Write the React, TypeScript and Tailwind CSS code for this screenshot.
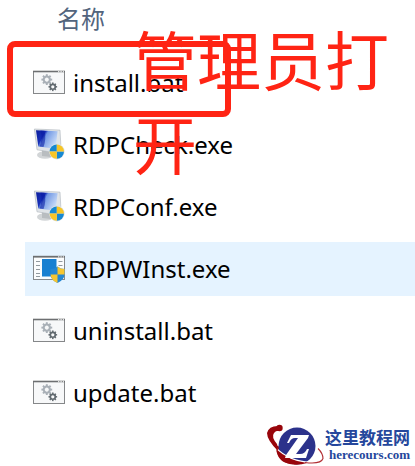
import type { ReactNode } from "react";

type Kind = "batch" | "computer" | "installer";

const files: { name: string; kind: Kind; highlighted?: boolean }[] = [
  { name: "install.bat", kind: "batch" },
  { name: "RDPCheck.exe", kind: "computer" },
  { name: "RDPConf.exe", kind: "computer" },
  { name: "RDPWInst.exe", kind: "installer", highlighted: true },
  { name: "uninstall.bat", kind: "batch" },
  { name: "update.bat", kind: "batch" },
];

function Gear({ x, y, r, color }: { x: number; y: number; r: number; color: string }) {
  return (
    <g transform={`translate(${x} ${y})`}>
      <circle r={r * 0.62} fill="none" stroke={color} strokeWidth={r * 0.42} />
      {[0, 45, 90, 135, 180, 225, 270, 315].map((a) => (
        <rect key={a} x={-r * 0.19} y={-r * 1.08} width={r * 0.38} height={r * 0.4} fill={color} transform={`rotate(${a})`} />
      ))}
    </g>
  );
}

function BatchIcon() {
  return (
    <svg viewBox="0 0 34 34" className="size-[34px]" aria-hidden="true">
      <rect x="1.5" y="5.5" width="31" height="22" fill="#f7f8f9" stroke="#858789" />
      <path d="M1 5.5h32" stroke="#6d6f71" strokeWidth="1.6" />
      <path d="M26 5.7h1.4m1 0h1.4m1 0h1.2" stroke="#fff" strokeWidth="1" />
      <Gear x={14.8} y={13.6} r={5} color="#a9b0b7" />
      <Gear x={20.8} y={20.8} r={4} color="#626a70" />
    </svg>
  );
}

function ComputerIcon() {
  return (
    <svg viewBox="0 0 34 34" className="size-[34px]" aria-hidden="true">
      <defs>
        <linearGradient id="screen" x1="0" y1="0" x2="1" y2="0.5">
          <stop offset="0" stopColor="#0b1c9c" />
          <stop offset="0.38" stopColor="#1730b8" />
          <stop offset="0.48" stopColor="#7298e4" />
          <stop offset="1" stopColor="#c8dbf8" />
        </linearGradient>
        <clipPath id="badge">
          <circle cx="24.8" cy="23.6" r="7.2" />
        </clipPath>
      </defs>
      <ellipse cx="13" cy="27" rx="8" ry="3.8" fill="#d2d5d7" />
      <path d="M10 22l8 2 1 5-9-1z" fill="#b9bdc0" />
      <path d="M2.4 1L28 2.1l.8 14.7-5 8L5 21.8z" fill="#e0e4e8" stroke="#aeb5bc" strokeWidth=".6" />
      <path d="M4 2.3l21.6 1-2.1 17.5L6.3 18.5z" fill="url(#screen)" />
      <path d="M8.5 2.5l4 .2q2 8-1 16.4l-4-.5Q11 10.5 8.5 2.5" fill="#0718a0" opacity=".55" />
      <circle cx="24.8" cy="23.6" r="7.8" fill="#dce3e6" />
      <g clipPath="url(#badge)">
        <path d="M17 16h7.8v7.6H17zM24.8 23.6H33V31h-8.2z" fill="#1688d2" />
        <path d="M24.8 16H33v7.6h-8.2zM17 23.6h7.8V31H17z" fill="#f7c526" />
      </g>
    </svg>
  );
}

function InstallerIcon() {
  return (
    <svg viewBox="0 0 34 34" className="size-[34px]" aria-hidden="true">
      <rect x="1.5" y="4.5" width="31" height="23" fill="#fbfcfd" stroke="#85898d" />
      <path d="M1 4.7h32" stroke="#6d6f71" strokeWidth="1.8" />
      <path d="M26 4.9h1.4m1 0h1.4m1 0h1.2" stroke="#fff" />
      <path d="M4 9.5h4m-4 4h4m-4 4h4m-4 4h4m-4 3h4M26.5 9.5h4m-4 4h4" stroke="#91999f" strokeWidth="1.2" />
      <path d="M10 7h14.5v17.5H10z" fill="#1980d1" />
      <path d="M18.5 17q4 0 7-2.5 3 2.5 7 2.5v5q0 6-7 9-7-3-7-9z" fill="#2587d2" />
      <path d="M25.5 14.5q3 2.5 7 2.5v5.5h-7zM18.5 22.5h7v8.5q-6.4-2.7-7-8.5z" fill="#f8c630" />
    </svg>
  );
}

const icons: Record<Kind, ReactNode> = {
  batch: <BatchIcon />,
  computer: <ComputerIcon />,
  installer: <InstallerIcon />,
};

function Logo() {
  return (
    <svg viewBox="0 0 60 43" className="h-[43px] w-[60px] shrink-0" aria-hidden="true">
      <path d="M11 22C11 38 20 41 29 41q8 0 13-3z" fill="#98050b" />
      <circle cx="32" cy="23" r="18.5" fill="#2c328b" />
      <path d="M11 24C20 34 36 41 58 38v5H44Q22 36 11 28z" fill="#fff" />
      <path d="M11 26q3 14 17 15.5 7 .8 14-1.5-18-2-31-14" fill="#98050b" />
      <path d="M15 3Q4 2 2 10q0 7 11 18 0-3-1-7-6-7-3-11 2-3 7-2z" fill="#98050b" />
      <circle cx="14.5" cy="5" r="3.2" fill="#98050b" />
      <path d="M40 39.5q16 2 18-4 0-5-5-10" fill="none" stroke="#b12e33" strokeWidth="1.1" />
      <path d="M26 12h18l-1 3-12 16h4q5 0 7-5h2l-3 9H20l1-3 12-17h-3q-4 0-6 5h-2z" fill="#fff" />
    </svg>
  );
}

export default function App() {
  return (
    <main className="relative min-h-screen overflow-hidden bg-white pl-[25px] font-['Noto_Sans','Noto_Sans_CJK_SC',sans-serif] text-black">
      <header className="flex h-14 pt-1 pl-8 font-['Noto_Sans_CJK_SC',sans-serif] text-2xl leading-7 text-[#52647d]">名称</header>
      <ul className="flex flex-col gap-2">
        {files.map((file) => (
          <li key={file.name} className={`flex h-[54px] items-center gap-[7px] pl-[7px] text-2xl ${file.highlighted ? "bg-[#e5f3ff]" : ""}`}>
            {icons[file.kind]}
            <span>{file.name}</span>
          </li>
        ))}
      </ul>
      <div className="absolute top-[41px] left-[7px] h-19 w-56 rounded-lg border-[6px] border-[#ff2414]" />
      <p className="absolute top-[15px] left-[133px] w-64 font-['Noto_Sans_CJK_SC',sans-serif] text-[64px] leading-[84px] break-all text-[#ff2414]">管理员打开</p>
      <footer className="absolute right-0 bottom-0 flex items-start text-[#25479c]">
        <Logo />
        <div className="pt-1 pr-[5px] text-right">
          <div className="font-['Noto_Sans_CJK_SC',sans-serif] text-[17px] leading-5 font-bold">这里教程网</div>
          <div className="font-['Liberation_Serif',serif] text-[13px] leading-4 font-bold">herecours.com</div>
        </div>
      </footer>
    </main>
  );
}
